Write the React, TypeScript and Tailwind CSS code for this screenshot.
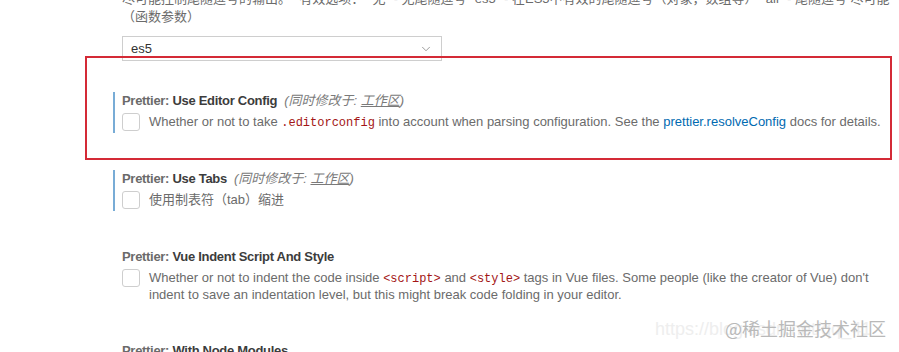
import { ChevronDown } from 'lucide-react';

const cn = (...c: (string | false | undefined)[]) => c.filter(Boolean).join(' ');

function Code({ children }: { children: string }) {
  return (
    <code className="font-['Liberation_Mono','DejaVu_Sans_Mono',monospace] text-[12px] leading-none text-[#a31515]">
      {children}
    </code>
  );
}

function Checkbox() {
  return <div className="mt-px h-[18px] w-[18px] shrink-0 rounded-[3px] border border-[#cecece] bg-white" />;
}

function Title({ label, modified }: { label: string; modified?: boolean }) {
  return (
    <div className="h-[20px] whitespace-nowrap leading-[17px]">
      <span className="font-bold tracking-[-0.3px] text-[#6a6a6a]">Prettier: </span>
      <span className="font-bold tracking-[-0.3px] text-[#3c3c3c]">{label}</span>
      {modified && (
        <span className="ml-[7px] italic text-[#7a7a7a]">
          (同时修改于: <span className="underline">工作区</span>)
        </span>
      )}
    </div>
  );
}

interface SettingProps {
  label: string;
  modified?: boolean;
  className?: string;
  children: React.ReactNode;
}

function Setting({ label, modified, className, children }: SettingProps) {
  return (
    <div
      className={cn(
        '-ml-[9px] border-l-2 pb-[2px] pl-[7px]',
        modified ? 'border-[#78acd6]' : 'border-transparent',
        className,
      )}
    >
      <Title label={label} modified={modified} />
      <div className="flex items-start gap-[9px]">
        <Checkbox />
        <div className="pt-px leading-[17px] text-[#6b6b6b]">{children}</div>
      </div>
    </div>
  );
}

export default function App() {
  return (
    <div className="relative h-[352px] w-[899px] overflow-hidden bg-white font-['Liberation_Sans','Noto_Sans_CJK_SC',sans-serif] text-[13px]">
      <div className="pl-[122px] pr-[9px]">
        <div className="-mt-[10px] leading-[18px] text-[#6b6b6b]">
          <div className="whitespace-nowrap">
            尽可能控制尾随逗号的输出。 "有效选项： "无" - 无尾随逗号 "es5" - 在ES5中有效的尾随逗号（对象，数组等） "all" - 尾随逗号 尽可能
          </div>
          <div>（函数参数）</div>
        </div>

        <div className="mt-[10px] flex h-[25px] w-[320px] items-center justify-between border border-[#cecece] px-2 text-[#333]">
          <span>es5</span>
          <ChevronDown className="h-[14px] w-[14px] text-[#777]" strokeWidth={1.25} />
        </div>

        <Setting label="Use Editor Config" modified className="mt-[31px]">
          Whether or not to take <Code>.editorconfig</Code> into account when parsing configuration. See the{' '}
          <span className="text-[#006ab1]">prettier.resolveConfig</span> docs for details.
        </Setting>

        <Setting label="Use Tabs" modified className="mt-[37px]">
          使用制表符（tab）缩进
        </Setting>

        <Setting label="Vue Indent Script And Style" className="mt-[37px]">
          Whether or not to indent the code inside <Code>{'<script>'}</Code> and <Code>{'<style>'}</Code> tags in Vue
          files. Some people (like the creator of Vue) don't indent to save an indentation level, but this might break
          code folding in your editor.
        </Setting>

        <div className="mt-[37px]">
          <Title label="With Node Modules" />
        </div>
      </div>

      {/* annotation box */}
      <div className="pointer-events-none absolute left-[85px] top-[56px] h-[104px] w-[807px] border-2 border-[#d42a36]" />

      {/* watermark */}
      <span className="pointer-events-none absolute left-[655px] top-[316px] whitespace-nowrap text-[18px] text-[#eeeeee]">
        https://blog.csdn.net/qq_41
      </span>
      <span className="pointer-events-none absolute left-[725px] top-[315px] whitespace-nowrap font-['Noto_Sans_CJK_SC',sans-serif] text-[18px] text-[#b9b9b9]">
        @稀土掘金技术社区
      </span>
    </div>
  );
}
